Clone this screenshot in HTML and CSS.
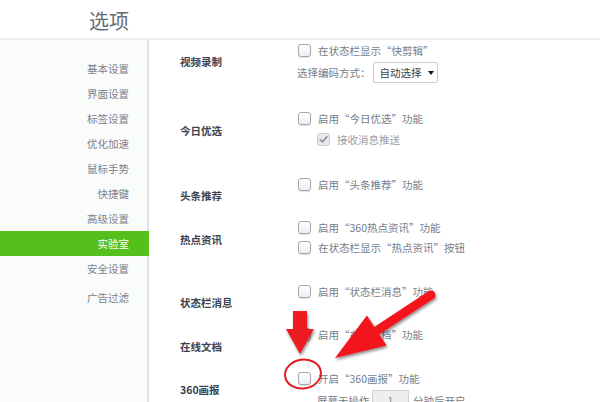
FILE: index.html
```html
<!DOCTYPE html>
<html lang="zh-CN">
<head>
<meta charset="utf-8">
<title>选项</title>
<link rel="stylesheet" href="styles.css">
</head>
<body>
<div class="page">
  <header class="top">
    <h1 class="page-title">选项</h1>
  </header>
  <div class="main">
    <nav class="side">
      <a class="nav-item">基本设置</a>
      <a class="nav-item">界面设置</a>
      <a class="nav-item">标签设置</a>
      <a class="nav-item">优化加速</a>
      <a class="nav-item">鼠标手势</a>
      <a class="nav-item">快捷键</a>
      <a class="nav-item">高级设置</a>
      <a class="nav-item active">实验室</a>
      <a class="nav-item">安全设置</a>
      <a class="nav-item nav-gap">广告过滤</a>
    </nav>
    <div class="content">
      <section class="sec">
        <div class="sec-title">视频录制</div>
        <div class="opts">
          <div class="row"><span class="cb"></span><span>在状态栏显示“快剪辑”</span></div>
          <div class="row row-select"><span class="lbl">选择编码方式：</span><span class="select">自动选择<i class="caret"></i></span></div>
        </div>
      </section>
      <section class="sec">
        <div class="sec-title">今日优选</div>
        <div class="opts">
          <div class="row"><span class="cb"></span><span>启用“今日优选”功能</span></div>
          <div class="row sub sub-tall"><span class="cb cb-checked"><svg viewBox="0 0 13 13" width="13" height="13"><path d="M3.2 6.8 L5.5 9 L9.8 3.9" fill="none" stroke="#8d939b" stroke-width="1.7" stroke-linecap="round" stroke-linejoin="round"/></svg></span><span class="muted">接收消息推送</span></div>
        </div>
      </section>
      <section class="sec">
        <div class="sec-title">头条推荐</div>
        <div class="opts">
          <div class="row"><span class="cb"></span><span>启用“头条推荐”功能</span></div>
        </div>
      </section>
      <section class="sec">
        <div class="sec-title">热点资讯</div>
        <div class="opts">
          <div class="row"><span class="cb"></span><span>启用“360热点资讯”功能</span></div>
          <div class="row"><span class="cb"></span><span>在状态栏显示“热点资讯”按钮</span></div>
        </div>
      </section>
      <section class="sec">
        <div class="sec-title">状态栏消息</div>
        <div class="opts">
          <div class="row"><span class="cb"></span><span>启用“状态栏消息”功能</span></div>
        </div>
      </section>
      <section class="sec">
        <div class="sec-title">在线文档</div>
        <div class="opts">
          <div class="row"><span class="cb"></span><span>启用“在线文档”功能</span></div>
        </div>
      </section>
      <section class="sec">
        <div class="sec-title">360画报</div>
        <div class="opts">
          <div class="row"><span class="cb"></span><span>开启“360画报”功能</span></div>
          <div class="row sub row-input"><span class="lbl">屏幕无操作</span><span class="num">1</span><span>分钟后开启</span></div>
        </div>
      </section>
    </div>
  </div>
  <svg class="marks" width="600" height="402" viewBox="0 0 600 402">
    <defs>
      <filter id="sh" x="-20%" y="-20%" width="140%" height="140%">
        <feDropShadow dx="1" dy="2" stdDeviation="1.4" flood-color="#000" flood-opacity="0.45"/>
      </filter>
      <linearGradient id="rg" x1="0" y1="0" x2="0" y2="1">
        <stop offset="0" stop-color="#ff2a2a"/>
        <stop offset="1" stop-color="#e0101a"/>
      </linearGradient>
    </defs>
    <polygon points="293,311 307,311 307,329 314,329 300,354 286,329 293,329" fill="#ec1c24" filter="url(#sh)"/>
    <ellipse cx="303" cy="374" rx="18" ry="14.5" fill="none" stroke="#e31b23" stroke-width="2" transform="rotate(-8 303 374)"/>
    <g filter="url(#sh)">
      <line x1="431" y1="295" x2="374" y2="332.5" stroke="#f2161e" stroke-width="9" stroke-linecap="round"/>
      <polygon points="335,358 366.9,315.6 386.6,345.6" fill="#f2161e"/>
    </g>
  </svg>
</div>
</body>
</html>
```

FILE: styles.css
```css
* { box-sizing: border-box; }

html, body {
  margin: 0;
  padding: 0;
  height: 100%;
}

body {
  background: #ffffff;
  font-family: "Noto Sans CJK SC", "Noto Sans", sans-serif;
  font-size: 10.5px;
  color: #767d88;
  overflow: hidden;
}

.page {
  position: relative;
  width: 600px;
  height: 402px;
  display: flex;
  flex-direction: column;
  overflow: hidden;
}

.top {
  height: 40px;
  border-bottom: 2px solid #eceef0;
  padding-left: 89px;
  flex: none;
}

.page-title {
  margin: 0;
  padding-top: 8px;
  font-size: 20px;
  font-weight: normal;
  line-height: 26px;
  color: #666b74;
}

.main {
  flex: 1;
  min-height: 0;
  display: flex;
}

.side {
  width: 149px;
  flex: none;
  background: #fafbfb;
  border-right: 2px solid #dfe2e6;
  padding-top: 16px;
  display: flex;
  flex-direction: column;
}

.nav-item {
  display: block;
  height: 25px;
  line-height: 25px;
  text-align: right;
  padding-right: 18px;
  color: #7b818b;
}

.nav-item.active {
  background: #55c01b;
  color: #ffffff;
  margin-right: -2px;
  padding-right: 20px;
}

.nav-gap { margin-top: 3.5px; }

.content {
  flex: 1;
  padding-left: 31px;
  display: flex;
  flex-direction: column;
  gap: 11.5px;
}

.sec {
  display: flex;
  align-items: flex-start;
}

.sec-title {
  width: 118px;
  flex: none;
  padding-top: 12px;
  line-height: 20px;
  font-weight: bold;
  color: #3b4350;
}

.opts {
  display: flex;
  flex-direction: column;
  padding-bottom: 12px;
}

.row {
  height: 20px;
  display: flex;
  align-items: center;
  white-space: nowrap;
}

.row.sub { padding-left: 19px; }
.row.sub-tall { height: 22px; }

.cb {
  width: 13px;
  height: 13px;
  flex: none;
  margin-right: 7px;
  border: 1px solid #a3a8ae;
  border-radius: 3px;
  background: linear-gradient(#ffffff, #eceef1);
  box-shadow: 0 1px 1px rgba(0, 0, 0, 0.12);
  position: relative;
}

.cb-checked {
  background: #e8eaed;
  border-color: #c6cad0;
  box-shadow: none;
}

.cb-checked svg {
  position: absolute;
  left: -1px;
  top: -1px;
}

.muted { color: #9aa0a8; }

.row-select {
  height: 25px;
  margin-left: -1px;
}

.lbl { color: #767d88; }

.select {
  margin-left: 2px;
  width: 65px;
  height: 21px;
  border: 1px solid #c9cdd2;
  border-radius: 2px;
  background: #ffffff;
  color: #3a3f47;
  display: flex;
  align-items: center;
  padding-left: 6px;
  gap: 6px;
}

.caret {
  width: 0;
  height: 0;
  border-left: 3.5px solid transparent;
  border-right: 3.5px solid transparent;
  border-top: 4px solid #111;
}

.row-input { height: 24px; }

.num {
  width: 37px;
  height: 20px;
  margin: 0 4px 0 2.5px;
  border: 1px solid #cfd2d6;
  background: #eeeeee;
  color: #888d95;
  display: flex;
  align-items: center;
  justify-content: center;
}

.marks {
  position: absolute;
  left: 0;
  top: 0;
  pointer-events: none;
}
```
